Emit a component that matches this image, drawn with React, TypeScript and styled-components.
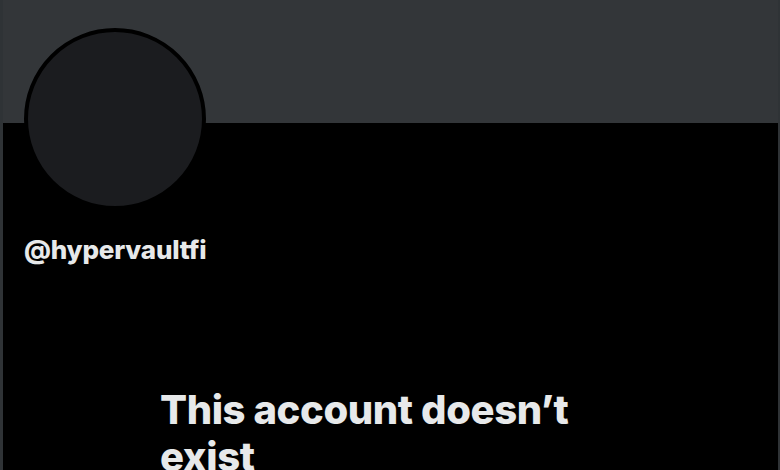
import React from "react";
import styled, { createGlobalStyle } from "styled-components";

const GlobalStyle = createGlobalStyle`
  html, body { margin: 0; padding: 0; background: #000; }
  body { font-family: "Inter", "Noto Sans", sans-serif; }
`;

const Page = styled.div`
  width: 780px;
  height: 470px;
  box-sizing: border-box;
  overflow: hidden;
  background: #000;
  border-left: 3px solid #2f3336;
  border-right: 2px solid #2f3336;
  display: flex;
  flex-direction: column;
`;

const Banner = styled.div`
  height: 123px;
  flex-shrink: 0;
  background: #333639;
`;

const Profile = styled.div`
  padding: 0 21px;
  display: flex;
  flex-direction: column;
  align-items: flex-start;
`;

const Avatar = styled.div`
  width: 174px;
  height: 174px;
  margin-top: -95px;
  border: 4px solid #000;
  border-radius: 50%;
  background: #1b1c1f;
`;

const Handle = styled.div`
  margin-top: 24px;
  font-size: 26px;
  line-height: 32px;
  font-weight: 800;
  color: #e7e9ea;
  letter-spacing: -0.2px;
`;

const Message = styled.div`
  padding: 0 0 0 157px;
  margin-top: 120px;
`;

const Title = styled.h1`
  margin: 0;
  max-width: 440px;
  font-size: 40px;
  line-height: 47px;
  font-weight: 800;
  color: #e7e9ea;
  letter-spacing: -0.4px;
`;

export default function App() {
  return (
    <>
      <GlobalStyle />
      <Page>
        <Banner />
        <Profile>
          <Avatar />
          <Handle>@hypervaultfi</Handle>
        </Profile>
        <Message>
          <Title>This account doesn’t exist</Title>
        </Message>
      </Page>
    </>
  );
}
